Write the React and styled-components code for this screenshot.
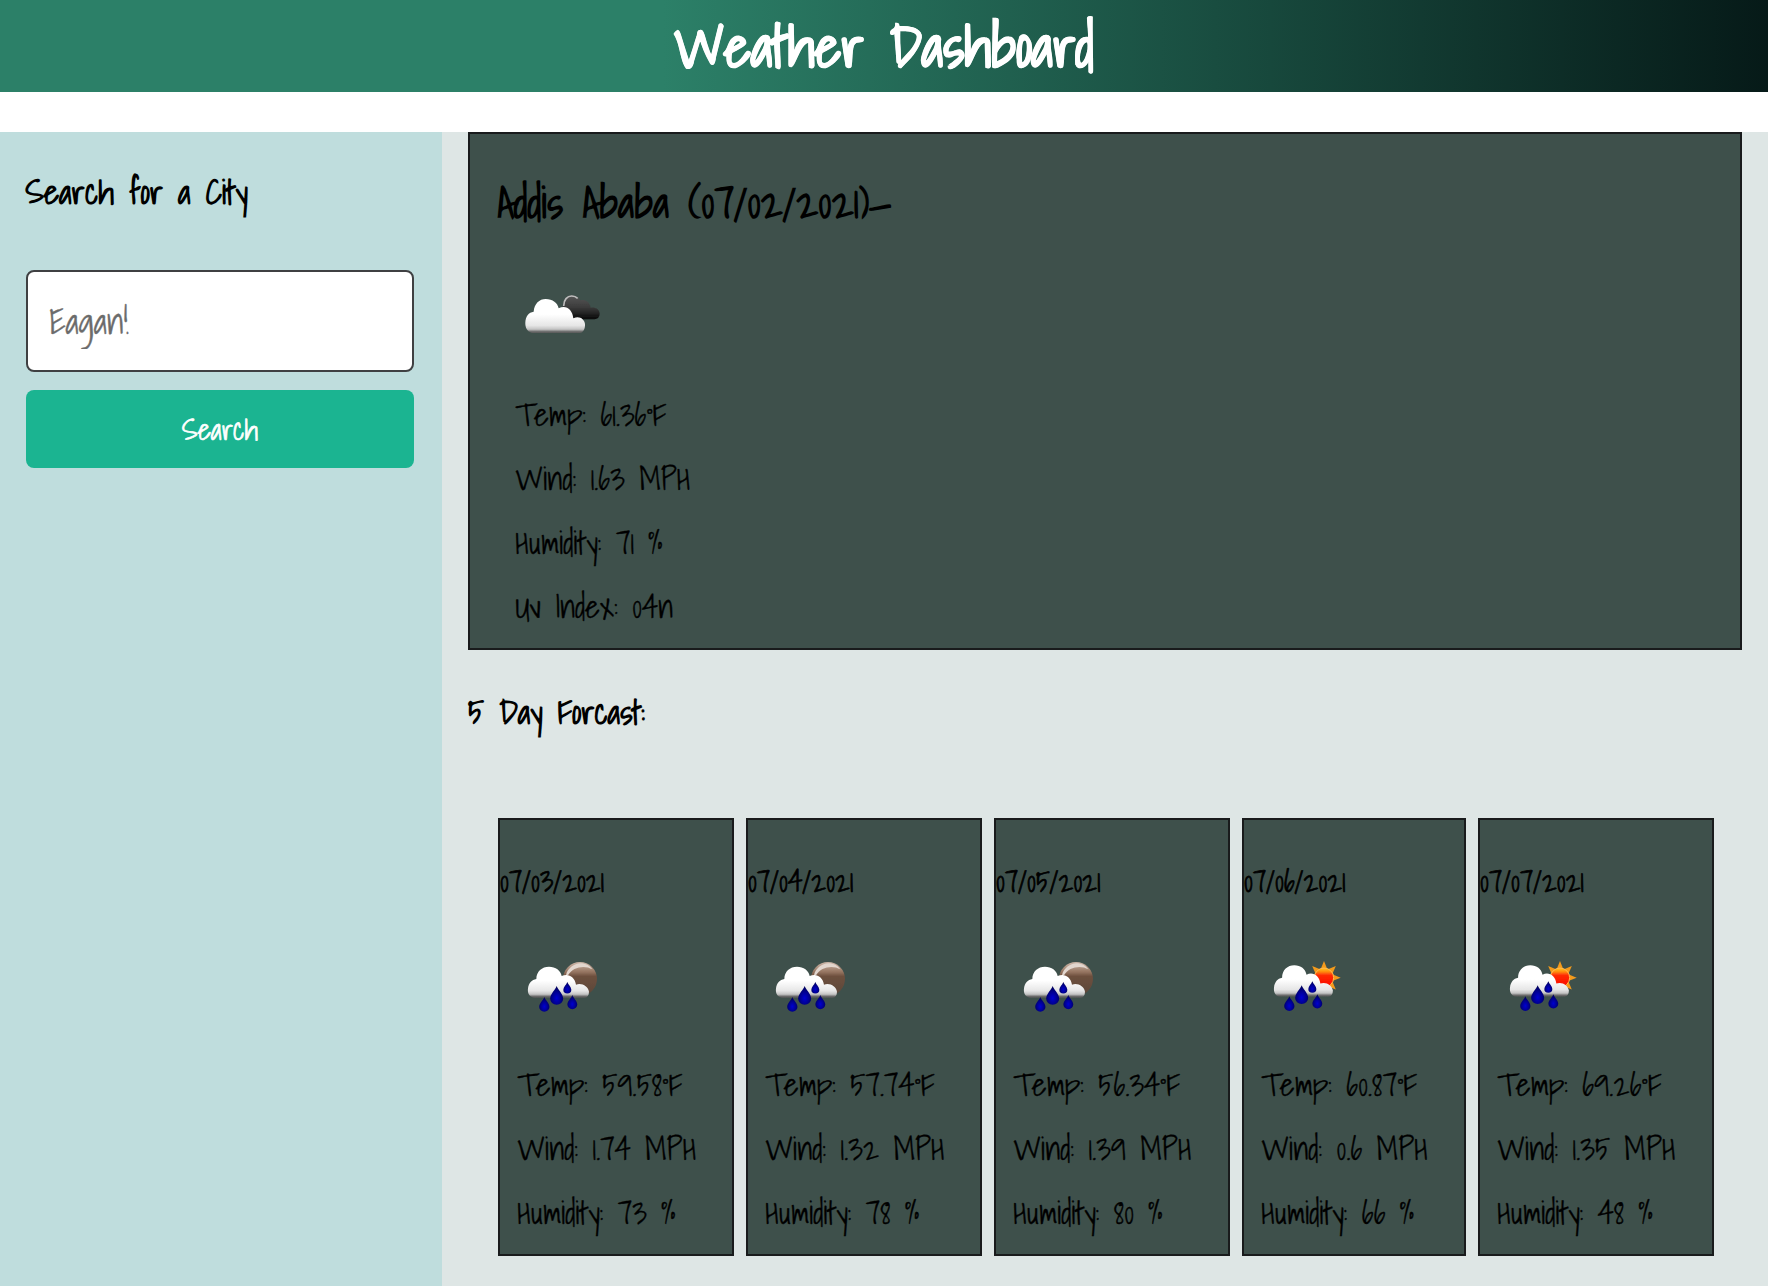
import React from "react";
import styled, { createGlobalStyle } from "styled-components";

const GlobalStyle = createGlobalStyle`
  *, *::before, *::after { box-sizing: border-box; }
  body {
    margin: 0;
    background: #fff;
    color: #000;
    font-family: "Shadows Into Light", cursive;
    font-size: 28.8px;
  }
  h1, h2, h3, h4, p { margin: 0; }
`;

const Header = styled.header`
  height: 92px;
  background: linear-gradient(90deg, #2c8068 0%, #2c8068 37.5%, #061a18 100%);
`;

const Title = styled.h1`
  color: #fff;
  font-size: 57.6px;
  line-height: 92px;
  text-align: center;
  -webkit-text-stroke: 0.7px;
`;

const Page = styled.main`
  display: flex;
  height: 1154px;
  margin-top: 40px;
`;

const Sidebar = styled.aside`
  width: 442px;
  padding: 33px 28px 0 25.5px;
  background: #bfdddd;
`;

const Heading = styled.h3`
  font-size: 33.7px;
  line-height: 54px;
`;

const SearchForm = styled.form`
  display: flex;
  flex-direction: column;
  gap: 18px;
  margin: 51px 0 0 0.5px;
`;

const SearchField = styled.input`
  height: 102px;
  padding: 0 21px 1px;
  border: 2px solid #3f4042;
  border-radius: 8px;
  background: #fff;
  font-family: inherit;
  font-size: 35.2px;
  -webkit-text-stroke: 0.35px;

  &::placeholder {
    color: #6b6b6b;
    opacity: 1;
  }
`;

const SearchButton = styled.button`
  height: 78px;
  padding: 0 0 1px;
  border: 0;
  border-radius: 8px;
  background: #1bb491;
  color: #fff;
  font-family: inherit;
  font-size: 28.9px;
  -webkit-text-stroke: 0.7px;
`;

const Content = styled.section`
  flex: 1;
  padding: 0 26px;
  background: #dee6e5;
`;

const Current = styled.article`
  height: 518px;
  padding-top: 34px;
  border: 2px solid #191b1c;
  background: #3e504b;
`;

const City = styled.h2`
  padding-left: 27.2px;
  font-size: 43.2px;
  line-height: 69px;
`;

const ForecastTitle = styled(Heading)`
  margin-top: 35px;
`;

const Forecast = styled.div`
  display: flex;
  gap: 12px;
  margin-top: 79px;
  padding-left: 30px;
`;

const Day = styled.article`
  width: ${(p) => (p.$slim ? 224 : 236)}px;
  height: 438px;
  padding-top: 36px;
  border: 2px solid #191b1c;
  background: #3e504b;
`;

const DayDate = styled.h4`
  font-size: 28.9px;
  font-weight: 400;
  line-height: 50px;
  -webkit-text-stroke: 0.75px;
`;

const IconBox = styled.svg`
  display: block;
  width: 110px;
  height: 90px;
  margin: ${(p) => (p.$wide ? "33px 0 23px 40px" : "34px 0 23px 10px")};
`;

const Readings = styled.div`
  padding-left: ${(p) => (p.$wide ? 45.3 : 17.2)}px;
`;

const Reading = styled.p`
  font-size: 31.68px;
  line-height: 64px;
  white-space: nowrap;
  -webkit-text-stroke: 0.35px;
`;

const CLOUD =
  "M72 173 C58 171 52 160 54 145 C56 130 65 119 79 117 C79 94 96 80 117 80 C137 80 152 91 155 108 C174 99 194 109 198 134 C216 128 234 139 237 155 C237 166 232 172 225 173 Z";
const DROPS = [
  [103, 171, 1.1],
  [140, 138, 1.4],
  [172, 126, 0.86],
  [187, 165, 1.06],
];

function Shades() {
  return (
    <defs>
      <linearGradient id="cloud" x1="0" y1="0" x2="0" y2="1">
        <stop offset="0.45" stopColor="#fff" />
        <stop offset="0.78" stopColor="#e6e6e6" />
        <stop offset="0.89" stopColor="#c4c4c4" />
        <stop offset="0.96" stopColor="#6a6a6a" />
        <stop offset="1" stopColor="#5a5a5a" />
      </linearGradient>
      <linearGradient id="dark" x1="0" y1="0" x2="0" y2="1">
        <stop offset="0" stopColor="#575757" />
        <stop offset="0.5" stopColor="#3b3b3b" />
        <stop offset="1" stopColor="#080808" />
      </linearGradient>
      <linearGradient id="moon" x1="0" y1="0" x2="0" y2="1">
        <stop offset="0" stopColor="#cdb7a9" />
        <stop offset="0.3" stopColor="#94735f" />
        <stop offset="0.42" stopColor="#6d503e" />
        <stop offset="1" stopColor="#5b4638" />
      </linearGradient>
      <linearGradient id="sun" x1="0" y1="0" x2="0" y2="1">
        <stop offset="0" stopColor="#ffc81a" />
        <stop offset="0.2" stopColor="#ff8a10" />
        <stop offset="0.38" stopColor="#ff2a05" />
        <stop offset="1" stopColor="#fb0800" />
      </linearGradient>
      <radialGradient id="drop" cx="0.5" cy="0.65" r="0.55">
        <stop offset="0" stopColor="#0505d0" />
        <stop offset="0.5" stopColor="#02029c" />
        <stop offset="1" stopColor="#040462" />
      </radialGradient>
      <filter id="soft" x="-10%" y="-10%" width="120%" height="120%">
        <feGaussianBlur stdDeviation="1.8" />
      </filter>
    </defs>
  );
}

function Drops() {
  return DROPS.map(([x, y, s]) => (
    <path
      key={x}
      transform={`translate(${x} ${y}) scale(${s})`}
      d="M0 0 C3 9 14 17 14 27 A14 13 0 0 1 -14 27 C-14 17 -3 9 0 0 Z"
      fill="url(#drop)"
    />
  ));
}

function CloudsIcon() {
  return (
    <IconBox viewBox="0 0 330 270" $wide>
      <Shades />
      <g filter="url(#soft)">
        <path d="M158 112 C157 88 171 76 186 76 C198 77 207 83 211 91 C225 88 238 94 242 113 C258 111 269 119 269 132 C268 144 260 148 250 148 H190 Z" fill="url(#dark)" />
        <path d="M161 108 C161 89 172 78 185 78 C193 78 199 81 203 85" fill="none" stroke="#bdbdbd" strokeWidth="5" />
        <path d="M66 189 C51 186 45 171 46 157 C47 139 56 127 71 125 C73 101 88 87 107 87 C128 87 143 99 146 115 C168 104 187 118 190 145 C207 136 223 146 225 162 C226 177 219 188 210 189 Z" fill="url(#cloud)" />
      </g>
    </IconBox>
  );
}

function NightRainIcon() {
  return (
    <IconBox viewBox="0 0 330 270">
      <Shades />
      <g filter="url(#soft)">
        <circle cx="210" cy="117" r="51" fill="url(#moon)" />
        <path d="M168 104 C174 84 192 71 211 70 C228 70 239 77 247 88 C225 74 188 80 174 106 Z" fill="#e2d6ce" />
        <path d={CLOUD} fill="url(#cloud)" />
        <Drops />
      </g>
    </IconBox>
  );
}

const RAYS = [0, 45, 90, 135, 180, 225, 270, 315];

function DayRainIcon() {
  return (
    <IconBox viewBox="12 0 330 270">
      <Shades />
      <g filter="url(#soft)">
        {RAYS.map((angle) => (
          <path key={angle} d="M222 63 L211 90 H233 Z" transform={`rotate(${angle} 222 113)`} fill="#f39a1c" />
        ))}
        <circle cx="222" cy="113" r="29" fill="url(#sun)" stroke="#ffb850" strokeWidth="3" />
        <g transform="translate(20 -5) scale(0.965 1.01)">
          <path d={CLOUD} fill="url(#cloud)" />
        </g>
        <g transform="translate(15 -2)">
          <Drops />
        </g>
      </g>
    </IconBox>
  );
}

const current = ["Temp: 61.36°F", "Wind: 1.63 MPH", "Humidity: 71 %", "Uv Index: 04n"];

const days = [
  { date: "07/03/2021", Icon: NightRainIcon, rows: ["Temp: 59.58°F", "Wind: 1.74 MPH", "Humidity: 73 %"] },
  { date: "07/04/2021", Icon: NightRainIcon, rows: ["Temp: 57.74°F", "Wind: 1.32 MPH", "Humidity: 78 %"] },
  { date: "07/05/2021", Icon: NightRainIcon, rows: ["Temp: 56.34°F", "Wind: 1.39 MPH", "Humidity: 80 %"] },
  { date: "07/06/2021", Icon: DayRainIcon, slim: true, rows: ["Temp: 60.87°F", "Wind: 0.6 MPH", "Humidity: 66 %"] },
  { date: "07/07/2021", Icon: DayRainIcon, rows: ["Temp: 69.26°F", "Wind: 1.35 MPH", "Humidity: 48 %"] },
];

function ReadingList({ rows, wide }) {
  return (
    <Readings $wide={wide}>
      {rows.map((text) => (
        <Reading key={text}>{text}</Reading>
      ))}
    </Readings>
  );
}

export default function App() {
  return (
    <>
      <GlobalStyle />
      <Header>
        <Title>Weather Dashboard</Title>
      </Header>
      <Page>
        <Sidebar>
          <Heading>Search for a City</Heading>
          <SearchForm onSubmit={(event) => event.preventDefault()}>
            <SearchField type="text" placeholder="Eagan!" />
            <SearchButton type="submit">Search</SearchButton>
          </SearchForm>
        </Sidebar>
        <Content>
          <Current>
            <City>Addis Ababa (07/02/2021)—</City>
            <CloudsIcon />
            <ReadingList rows={current} wide />
          </Current>
          <ForecastTitle>5 Day Forcast:</ForecastTitle>
          <Forecast>
            {days.map(({ date, Icon, slim, rows }) => (
              <Day key={date} $slim={slim}>
                <DayDate>{date}</DayDate>
                <Icon />
                <ReadingList rows={rows} />
              </Day>
            ))}
          </Forecast>
        </Content>
      </Page>
    </>
  );
}
